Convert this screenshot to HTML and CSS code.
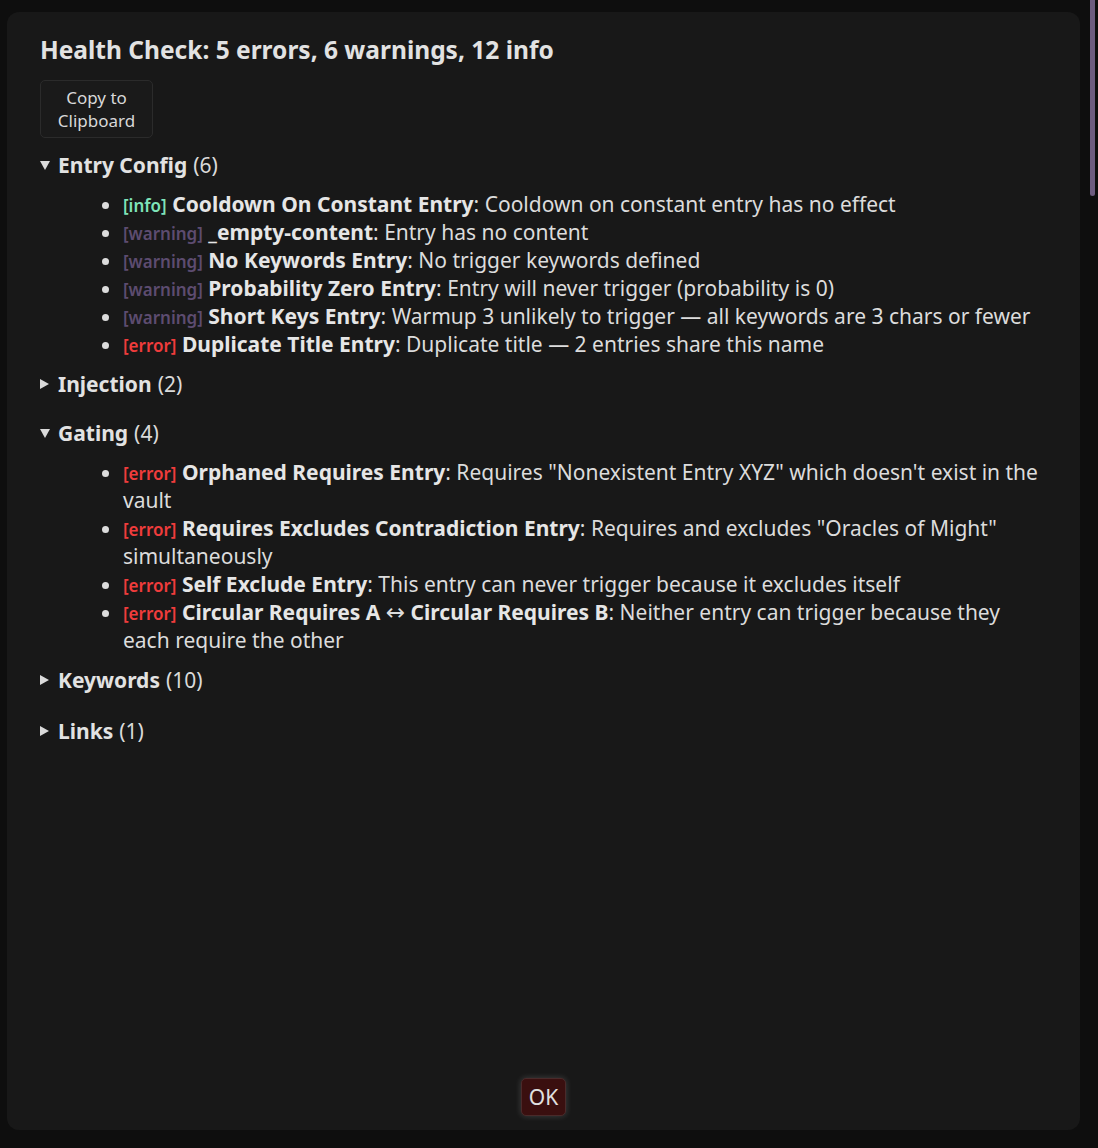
FILE: index.html
```html
<!DOCTYPE html>
<html>
<head>
    <meta charset="utf-8">
    <link rel="stylesheet" href="styles.css">
</head>
<body>

<div class="page">
    <div class="dialog">
        <div class="content">
            <h2 class="title">Health Check: 5 errors, 6 warnings, 12 info</h2>
            <button class="copy-btn">Copy to Clipboard</button>

            <details class="group" open>
                <summary><b>Entry Config</b> (6)</summary>
                <ul>
                    <li><span class="tag info">[info]</span> <b>Cooldown On Constant Entry</b>: Cooldown on constant entry has no effect</li>
                    <li><span class="tag warning">[warning]</span> <b>_empty-content</b>: Entry has no content</li>
                    <li><span class="tag warning">[warning]</span> <b>No Keywords Entry</b>: No trigger keywords defined</li>
                    <li><span class="tag warning">[warning]</span> <b>Probability Zero Entry</b>: Entry will never trigger (probability is 0)</li>
                    <li><span class="tag warning">[warning]</span> <b>Short Keys Entry</b>: Warmup 3 unlikely to trigger — all keywords are 3 chars or fewer</li>
                    <li><span class="tag error">[error]</span> <b>Duplicate Title Entry</b>: Duplicate title — 2 entries share this name</li>
                </ul>
            </details>

            <details class="group">
                <summary><b>Injection</b> (2)</summary>
            </details>

            <details class="group" open>
                <summary><b>Gating</b> (4)</summary>
                <ul>
                    <li><span class="tag error">[error]</span> <b>Orphaned Requires Entry</b>: Requires "Nonexistent Entry XYZ" which doesn't exist in the vault</li>
                    <li><span class="tag error">[error]</span> <b>Requires Excludes Contradiction Entry</b>: Requires and excludes "Oracles of Might" simultaneously</li>
                    <li><span class="tag error">[error]</span> <b>Self Exclude Entry</b>: This entry can never trigger because it excludes itself</li>
                    <li><span class="tag error">[error]</span> <b>Circular Requires A</b> <span class="arrow">↔</span> <b>Circular Requires B</b>: Neither entry can trigger because they each require the other</li>
                </ul>
            </details>

            <details class="group">
                <summary><b>Keywords</b> (10)</summary>
            </details>

            <details class="group">
                <summary><b>Links</b> (1)</summary>
            </details>
        </div>

        <div class="footer">
            <button class="ok-btn">OK</button>
        </div>
    </div>
</div>

<div class="scroll-thumb"></div>

</body>
</html>
```

FILE: styles.css
```css
html, body {
    margin: 0;
    padding: 0;
    background-color: #0e0e0e;
}

body {
    font-family: "Noto Sans", "Open Sans", sans-serif;
    font-size: 21px;
    color: #dcdcdc;
    height: 1148px;
    overflow: hidden;
}

.page {
    padding: 12px 18px 0 7px;
}

.dialog {
    box-sizing: border-box;
    width: 1073px;
    height: 1118px;
    background-color: #181818;
    border-radius: 12px;
    padding: 25px 33px 14px 33px;
    display: flex;
    flex-direction: column;
}

.content {
    flex: 1;
}

.title {
    font-size: 24.5px;
    font-weight: bold;
    color: #e2e2e2;
    margin: 0 0 17px 0;
    line-height: 26px;
}

.copy-btn {
    display: block;
    box-sizing: border-box;
    width: 113px;
    height: 58px;
    font-family: "Noto Sans", sans-serif;
    font-size: 17px;
    line-height: 23px;
    color: #d8d8d8;
    background-color: #1a1a1a;
    border: 1px solid #2b2b2b;
    border-radius: 5px;
    padding: 5px 8px;
    margin-bottom: 13px;
}

.group {
    margin-bottom: 12px;
}

.group:not([open]) {
    margin-bottom: 21px;
}

.group:last-child {
    margin-top: 23px;
}

summary {
    line-height: 28px;
    color: #dadada;
    list-style: none;
    display: flex;
    align-items: center;
}

summary::-webkit-details-marker {
    display: none;
}

summary::before {
    content: "";
    width: 0;
    height: 0;
    border-left: 5px solid transparent;
    border-right: 5px solid transparent;
    border-top: 9px solid #dadada;
    margin-right: 8px;
}

.group:not([open]) summary::before {
    border-top: 5px solid transparent;
    border-bottom: 5px solid transparent;
    border-left: 9px solid #dadada;
    border-right: 0;
    margin-right: 9px;
}

summary b {
    color: #e2e2e2;
    margin-right: 6px;
}

ul {
    margin: 11px 0 0 0;
    padding-left: 83px;
}

li {
    line-height: 28px;
}

li b {
    color: #e6e6e6;
}

.tag {
    font-size: 17px;
    font-weight: 600;
    line-height: 1;
}

.arrow {
    font-family: "DejaVu Sans", sans-serif;
    font-size: 23px;
    line-height: 1;
}

.info {
    color: #7fe3b8;
}

.warning {
    color: #5d4c70;
}

.error {
    color: #f03c3c;
}

.footer {
    display: flex;
    justify-content: center;
}

.ok-btn {
    font-family: "Noto Sans", sans-serif;
    font-size: 21px;
    color: #e0e0e0;
    background-color: #3a0f0f;
    border: 1px solid #4a2a2a;
    border-radius: 5px;
    padding: 4px 7px;
    line-height: 28px;
    box-shadow: 0 0 6px rgba(255, 255, 255, 0.18);
}

.scroll-thumb {
    position: absolute;
    top: 0;
    left: 1090px;
    width: 5px;
    height: 196px;
    background-color: #6d5c80;
    border-radius: 0 0 3px 3px;
}
```
